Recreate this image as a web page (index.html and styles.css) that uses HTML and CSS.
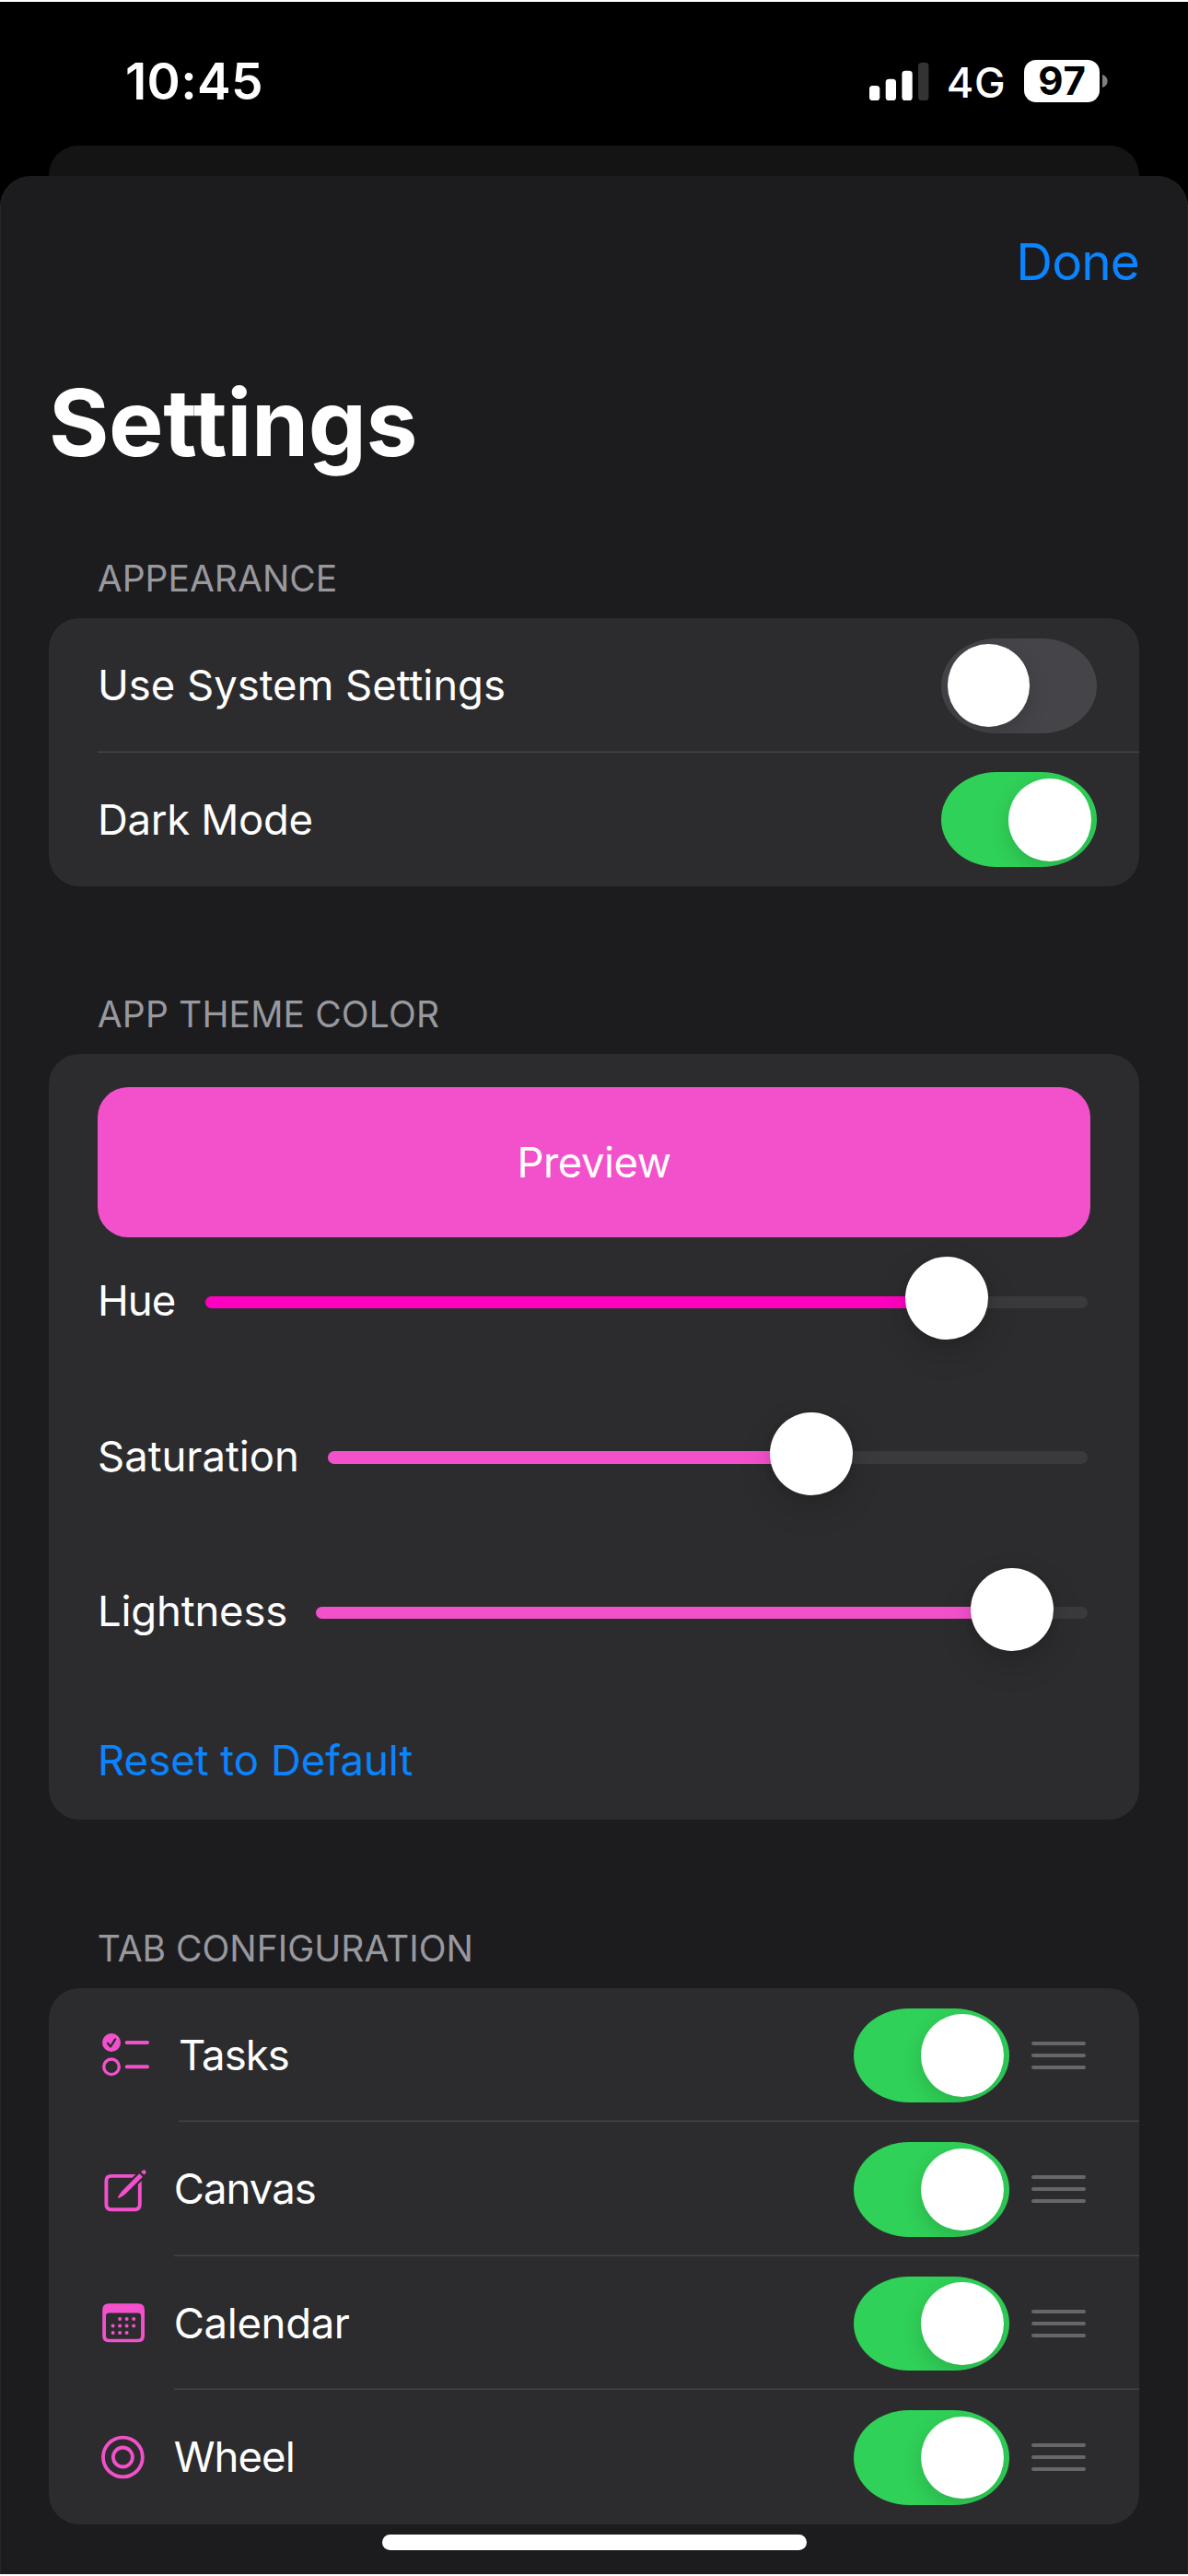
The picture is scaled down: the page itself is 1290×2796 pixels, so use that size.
FILE: index.html
```
<!DOCTYPE html>
<html lang="en">
<head>
<meta charset="utf-8">
<title>Settings</title>
<link rel="stylesheet" href="styles.css">
</head>
<body>
<div class="screen">
  <header class="status">
    <span class="time">10:45</span>
    <div class="status-right">
      <svg class="signal" width="65" height="41" viewBox="0 0 65 41" fill="#fff">
        <rect x="0" y="25" width="11.3" height="16" rx="3.6"/>
        <rect x="17.7" y="17.7" width="11.3" height="23.3" rx="3.6"/>
        <rect x="35.4" y="8.8" width="11.3" height="32.2" rx="3.6"/>
        <rect x="53.1" y="0" width="11.3" height="41" rx="3.6" fill="#333"/>
      </svg>
      <span class="network">4G</span>
      <div class="battery">
        <span class="battery-level">97</span>
        <svg width="6" height="14" viewBox="0 0 6 14"><path d="M0 0C3.4 1 5.6 3.7 5.6 7S3.4 13 0 14Z" fill="#808080"/></svg>
      </div>
    </div>
  </header>
  <div class="back-sheet"></div>
  <main class="sheet">
    <nav class="nav"><a class="done">Done</a></nav>
    <h1 class="title">Settings</h1>

    <section class="section">
      <h2 class="heading">APPEARANCE</h2>
      <div class="card">
        <div class="row">
          <div class="row-body divider">
            <span class="label">Use System Settings</span>
            <span class="toggle"><span class="knob"></span></span>
          </div>
        </div>
        <div class="row">
          <div class="row-body">
            <span class="label ls-mid">Dark Mode</span>
            <span class="toggle on"><span class="knob"></span></span>
          </div>
        </div>
      </div>
    </section>

    <section class="section">
      <h2 class="heading ls-theme">APP THEME COLOR</h2>
      <div class="card theme">
        <div class="preview">Preview</div>
        <div class="sliders">
          <div class="slider hue">
            <span class="label ls-tight">Hue</span>
            <div class="track"><div class="fill" style="width:84.07%"></div><span class="thumb" style="left:84.07%"></span></div>
          </div>
          <div class="slider saturation">
            <span class="label">Saturation</span>
            <div class="track"><div class="fill" style="width:63.58%"></div><span class="thumb" style="left:63.58%"></span></div>
          </div>
          <div class="slider lightness">
            <span class="label ls-light">Lightness</span>
            <div class="track"><div class="fill" style="width:90.22%"></div><span class="thumb" style="left:90.22%"></span></div>
          </div>
        </div>
        <a class="reset">Reset to Default</a>
      </div>
    </section>

    <section class="section">
      <h2 class="heading">TAB CONFIGURATION</h2>
      <div class="card tabs">
        <div class="row">
          <div class="icon icon-wide">
            <svg width="64" height="60" viewBox="0 0 64 60" fill="none" stroke="#f351cb" stroke-linecap="round">
              <circle cx="15" cy="17" r="10" fill="#f351cb" stroke="none"/>
              <path d="M11 17.8l3.1 3.6 5.1-8" stroke="#2c2c2e" stroke-width="2.3" stroke-linejoin="round"/>
              <circle cx="15" cy="43.3" r="8.3" stroke-width="3.4"/>
              <path d="M31.7 17H54M31.7 43.3H54" stroke-width="4"/>
            </svg>
          </div>
          <div class="row-body divider">
            <span class="label ls-tight">Tasks</span>
            <span class="toggle on"><span class="knob"></span></span>
            <span class="handle"><i></i><i></i><i></i></span>
          </div>
        </div>
        <div class="row">
          <div class="icon">
            <svg width="64" height="60" viewBox="0 0 64 60" fill="none" stroke="#f351cb">
              <path d="M41 15.9H14.8Q9.4 15.9 9.4 21.3V46.8Q9.4 52.2 14.8 52.2H40.4Q45.8 52.2 45.8 46.8V21" stroke-width="3.9"/>
              <path d="M27 35.2L48 14.2" stroke="#2c2c2e" stroke-width="9.6"/>
              <path d="M45.4 13.2L48.9 16.7L31.4 34.2C29.4 36 26.6 38.3 23.4 39.8C22.4 40.2 21.8 39.6 22.2 38.6C23.7 35.4 26 32.6 27.9 30.7Z" fill="#f351cb" stroke="none"/>
              <path d="M47.1 11.4L48.9 9.7Q50.5 8.6 51.9 9.8Q53.3 11.2 52.1 12.9L50.4 14.6Z" fill="#f351cb" stroke="none"/>
            </svg>
          </div>
          <div class="row-body divider">
            <span class="label ls-tight">Canvas</span>
            <span class="toggle on"><span class="knob"></span></span>
            <span class="handle"><i></i><i></i><i></i></span>
          </div>
        </div>
        <div class="row">
          <div class="icon">
            <svg width="64" height="60" viewBox="0 0 64 60" fill="#f351cb">
              <path fill-rule="evenodd" d="M12.2 9.2H44Q51 9.2 51 16.2V44.2Q51 51.2 44 51.2H12.2Q5.2 51.2 5.2 44.2V16.2Q5.2 9.2 12.2 9.2ZM12.4 19.6Q9 19.6 9 23V44.3Q9 47.7 12.4 47.7H43.7Q47.1 47.7 47.1 44.3V23Q47.1 19.6 43.7 19.6Z"/>
              <circle cx="24.1" cy="26" r="2"/><circle cx="31.6" cy="26" r="2"/><circle cx="39.2" cy="26" r="2"/>
              <circle cx="16.6" cy="33.5" r="2"/><circle cx="24.1" cy="33.5" r="2"/><circle cx="31.6" cy="33.5" r="2"/><circle cx="39.2" cy="33.5" r="2"/>
              <circle cx="16.6" cy="41" r="2"/><circle cx="24.1" cy="41" r="2"/><circle cx="31.6" cy="41" r="2"/>
            </svg>
          </div>
          <div class="row-body divider">
            <span class="label ls-mid">Calendar</span>
            <span class="toggle on"><span class="knob"></span></span>
            <span class="handle"><i></i><i></i><i></i></span>
          </div>
        </div>
        <div class="row">
          <div class="icon">
            <svg width="64" height="60" viewBox="0 0 64 60" fill="none" stroke="#f351cb" stroke-width="3.8">
              <circle cx="27.4" cy="30" r="21.4"/>
              <circle cx="27.4" cy="30" r="10.5"/>
            </svg>
          </div>
          <div class="row-body">
            <span class="label ls-tight">Wheel</span>
            <span class="toggle on"><span class="knob"></span></span>
            <span class="handle"><i></i><i></i><i></i></span>
          </div>
        </div>
      </div>
    </section>
    <div class="home-indicator"></div>
  </main>
</div>
</body>
</html>
```
FILE: styles.css
```
* { box-sizing: border-box; }

body {
  margin: 0;
  background: #000;
  font-family: Inter, "Liberation Sans", sans-serif;
  color: #fff;
}

.screen {
  width: 1290px;
  height: 2796px;
  overflow: hidden;
  display: flex;
  flex-direction: column;
  background: #000;
  border-top: 2px solid #fff;
  border-bottom: 2px solid #fff;
}

/* Status bar */
.status {
  flex: none;
  height: 156px;
  padding: 16px 87px 0 136px;
  display: flex;
  align-items: center;
  justify-content: space-between;
}
.time { font-size: 55px; font-weight: 600; letter-spacing: 0.3px; line-height: 60px; }
.status-right { display: flex; align-items: center; }
.signal { display: block; }
.network { margin: 3px 19.4px 0 18.5px; font-size: 45px; font-weight: 500; line-height: 50px; letter-spacing: 0.87px; }
.battery { display: flex; align-items: center; gap: 3px; }
.battery-level {
  width: 82px;
  height: 46px;
  border-radius: 13px;
  background: #fff;
  color: #000;
  font-size: 42px;
  font-weight: 650;
  line-height: 46px;
  text-align: center;
  letter-spacing: 0.8px;
  padding-left: 1px;
}

/* Sheets */
.back-sheet {
  flex: none;
  height: 33px;
  margin: 0 53px;
  border-radius: 32px 32px 0 0;
  background: #141414;
}
.sheet {
  flex: 1;
  min-height: 0;
  border-radius: 34px 34px 0 0;
  background: #1c1c1e;
  box-shadow: inset 1px 0 #262628, inset -1px 0 #262628;
  display: flex;
  flex-direction: column;
  padding: 0 53px;
}
.nav { flex: none; height: 187px; padding-bottom: 1px; display: flex; align-items: center; justify-content: flex-end; }
.done { font-size: 55px; letter-spacing: -0.9px; color: #0a84ff; }
.title {
  flex: none;
  margin: 0 0 44px;
  font-size: 100px;
  font-weight: 700;
  line-height: 161px;
  letter-spacing: -0.4px;
}

/* Sections */
.section { flex: none; margin-bottom: 94.4px; }
.section:last-of-type { margin-bottom: 0; }
.heading {
  margin: 0;
  padding: 1px 0 0 52.8px;
  height: 88px;
  line-height: 88px;
  font-size: 39px;
  font-weight: 400;
  color: #98989f;
}
.ls-theme { letter-spacing: 0.15px; }
.card { border-radius: 33px; background: #2c2c2e; }

.row { height: 145.5px; padding-left: 53px; display: flex; }
.row-body { flex: 1; padding: 1px 46px 0 0; display: flex; align-items: center; }
.divider { box-shadow: inset 0 -1.5px #434346; }
.label { font-size: 45.5px; line-height: 60px; white-space: nowrap; letter-spacing: -0.05px; }
.ls-tight { letter-spacing: -0.95px; }
.ls-mid { letter-spacing: -0.35px; }
.ls-light { letter-spacing: -0.2px; }

.toggle {
  margin-left: auto;
  width: 169px;
  height: 102.6px;
  border-radius: 60px / 51.3px;
  background: #454549;
  padding: 6.5px;
  display: flex;
  overflow: hidden;
}
.toggle.on { background: #30d158; justify-content: flex-end; }
.knob {
  width: 89.6px;
  height: 89.6px;
  border-radius: 50%;
  background: #fff;
  box-shadow: 0 8px 22px rgba(0, 0, 0, 0.15);
}

/* Theme colour */
.theme { height: 830.8px; padding: 36px 53px 0; }
.preview {
  height: 162.6px;
  border-radius: 33px;
  background: #f351cb;
  font-size: 45.5px;
  letter-spacing: -0.5px;
  line-height: 163.6px;
  text-align: center;
}
.sliders { display: flex; flex-direction: column; gap: 31.7px; }
.slider { height: 137px; padding: 1px 3px 0 0; display: grid; align-items: center; }
.hue { grid-template-columns: 116.5px 1fr; --tint: #ff00c0; }
.saturation { grid-template-columns: 250px 1fr; --tint: #f351cb; }
.lightness { grid-template-columns: 236.7px 1fr; --tint: #f351cb; }
.track { position: relative; height: 13.4px; margin-top: 2.6px; border-radius: 7px; background: #3a3a3d; }
.fill { height: 100%; border-radius: 7px 0 0 7px; background: var(--tint); }
.thumb {
  position: absolute;
  top: 50%;
  width: 90px;
  height: 90px;
  margin: -49px 0 0 -45px;
  border-radius: 50%;
  background: #fff;
  box-shadow: 0 14px 36px rgba(0, 0, 0, 0.14), 0 2px 10px rgba(0, 0, 0, 0.1);
}
.reset {
  display: block;
  margin-top: 28px;
  line-height: 131px;
  font-size: 45.5px;
  color: #0a84ff;
}

/* Tabs */
.icon { flex: none; width: 82.7px; display: flex; align-items: center; }
.icon-wide { width: 88px; }
.tabs .row-body { padding-right: 58px; }
.handle { margin-left: 24px; width: 59px; display: flex; flex-direction: column; gap: 8.7px; }
.handle i { height: 4.3px; border-radius: 2.2px; background: #67676a; }

.home-indicator {
  flex: none;
  align-self: center;
  margin-top: 11px;
  width: 461px;
  height: 17px;
  border-radius: 9px;
  background: #fff;
}
```
